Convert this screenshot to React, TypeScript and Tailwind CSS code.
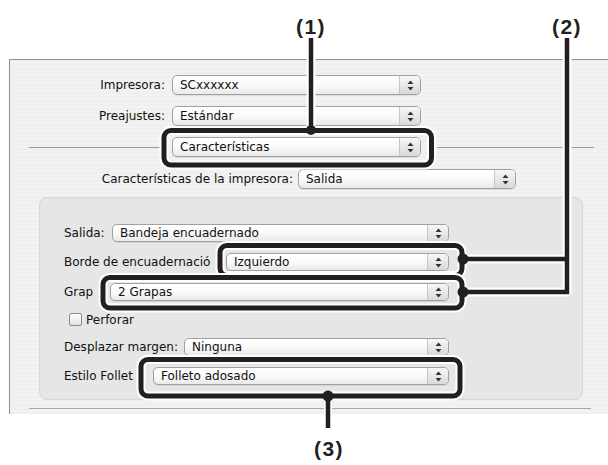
import React from "react";

const ui = { fontFamily: '"DejaVu Sans", "Liberation Sans", sans-serif' };
const callout = { fontFamily: '"Liberation Sans", Arial, sans-serif' };

function Arrows() {
  return (
    <svg width="7" height="11" viewBox="0 0 7 11">
      <path d="M3.5 0.5 L6.5 4 L0.5 4 Z" fill="#333" />
      <path d="M0.5 7 L6.5 7 L3.5 10.5 Z" fill="#333" />
    </svg>
  );
}

function Popup({ value, className }: { value: string; className: string }) {
  return (
    <div
      className={`flex shrink-0 items-stretch rounded-[5px] border border-[#a0a0a0] bg-gradient-to-b from-white via-[#fafafa] to-[#e9e9e9] shadow-[0_1px_0_rgba(0,0,0,0.08)] ${className}`}
    >
      <div className="flex flex-1 items-center whitespace-nowrap pl-[7px] text-[#111]">{value}</div>
      <div className="flex w-[21px] items-center justify-center rounded-r-[4px] border-l border-[#c6c6c6] bg-gradient-to-b from-[#f7f7f7] to-[#d9d9d9]">
        <Arrows />
      </div>
    </div>
  );
}

function Label({ text, className }: { text: string; className: string }) {
  return <div className={`shrink-0 whitespace-nowrap text-[#111] ${className}`}>{text}</div>;
}

function Overlay() {
  const k = "#231f20";
  return (
    <svg className="pointer-events-none absolute left-0 top-0" width="608" height="465" viewBox="0 0 608 465">
      <g fill="none" stroke="#fff" strokeWidth="9" strokeLinejoin="round">
        <rect x="164" y="130.5" width="267.5" height="34.5" rx="7" />
        <path d="M311 40 V130" />
        <rect x="220" y="245.5" width="242" height="30" rx="7" />
        <path d="M462 259 H567 V292 H462 M567 292 V40" />
      </g>
      <g fill="none" stroke={k} strokeWidth="5">
        <rect x="164" y="130.5" width="267.5" height="34.5" rx="7" />
        <rect x="220" y="245.5" width="242" height="30" rx="7" />
      </g>
      <g fill="none" stroke={k} strokeWidth="4.5">
        <path d="M311 38 V130" />
        <path d="M462 259 H567 M462 292 H567 M567 38 V294.2" />
      </g>
      <rect x="103" y="277.5" width="359" height="30.5" rx="7" fill="none" stroke="#fff" strokeWidth="9" />
      <rect x="103" y="277.5" width="359" height="30.5" rx="7" fill="none" stroke={k} strokeWidth="5" />
      <rect x="141" y="359.5" width="319" height="36.5" rx="7" fill="none" stroke="#fff" strokeWidth="9" />
      <path d="M328 396 V428" stroke="#fff" strokeWidth="8" />
      <rect x="141" y="359.5" width="319" height="36.5" rx="7" fill="none" stroke={k} strokeWidth="5" />
      <path d="M328 396 V428" stroke={k} strokeWidth="4.5" />
      <g fill={k}>
        <circle cx="311" cy="130" r="5" />
        <circle cx="463" cy="259" r="5.5" />
        <circle cx="463" cy="292" r="5.5" />
        <circle cx="328" cy="396" r="5.5" />
      </g>
    </svg>
  );
}

export default function App() {
  return (
    <div className="relative h-[465px] w-[608px] overflow-hidden bg-white text-[12px]" style={ui}>
      <div className="ml-[9px] mt-[59px] flex h-[355px] w-[599px] flex-col border-l border-t border-[#8f8f8f] bg-[repeating-linear-gradient(0deg,#efefef_0px,#efefef_2px,#f2f2f2_2px,#f2f2f2_4px)] pt-[15px]">
        <div className="flex h-[20px] items-center">
          <Label text="Impresora:" className="w-[155px] text-right" />
          <Popup value="SCxxxxxx" className="ml-[7px] h-[20px] w-[249px]" />
        </div>
        <div className="mt-[11px] flex h-[20px] items-center">
          <Label text="Preajustes:" className="w-[155px] text-right" />
          <Popup value="Estándar" className="ml-[7px] h-[20px] w-[249px]" />
        </div>
        <div className="mt-[11px] flex h-[20px] items-center">
          <div className="ml-[19px] h-px w-[131px] bg-[#9a9a9a]" />
          <Popup value="Características" className="ml-[12px] h-[20px] w-[249px]" />
          <div className="ml-[16px] h-px w-[157px] bg-[#9a9a9a]" />
        </div>
        <div className="mt-[12px] flex h-[20px] items-center">
          <Label text="Características de la impresora:" className="w-[283px] text-right" />
          <Popup value="Salida" className="ml-[5px] h-[20px] w-[218px]" />
        </div>
        <div className="ml-[29px] mt-[8px] flex h-[203px] w-[544px] flex-col rounded-[8px] border border-[#d6d6d6] bg-[#e6e6e6] pl-[24px] pt-[26px]">
          <div className="flex h-[18px] items-center">
            <Label text="Salida:" className="w-[45px]" />
            <Popup value="Bandeja  encuadernado" className="ml-[3px] h-[18px] w-[337px]" />
          </div>
          <div className="mt-[11px] flex h-[18px] items-center">
            <Label text="Borde de encuadernació" className="w-[156px]" />
            <Popup value="Izquierdo" className="ml-[6px] h-[18px] w-[223px]" />
          </div>
          <div className="mt-[12px] flex h-[18px] items-center">
            <Label text="Grap" className="w-[39px]" />
            <Popup value="2 Grapas" className="ml-[7px] h-[18px] w-[339px]" />
          </div>
          <div className="mt-[12px] flex h-[13px] items-center">
            <div className="ml-[5px] h-[13px] w-[13px] rounded-[2px] border border-[#8a8a8a] bg-gradient-to-b from-white to-[#e2e2e2]" />
            <span className="ml-[4px] text-[#111]">Perforar</span>
          </div>
          <div className="mt-[12px] flex h-[18px] items-center">
            <Label text="Desplazar margen:" className="w-[117px]" />
            <Popup value="Ninguna" className="ml-[3px] h-[18px] w-[265px]" />
          </div>
          <div className="mt-[11px] flex h-[18px] items-center">
            <Label text="Estilo Follet" className="w-[77px]" />
            <Popup value="Folleto adosado" className="ml-[12px] h-[18px] w-[296px]" />
          </div>
        </div>
        <div className="ml-[19px] mt-[8px] h-px w-[562px] bg-[#a8a8a8]" />
      </div>

      <Overlay />

      <div className="absolute left-[291px] top-[15px] w-[40px] text-center text-[21px] font-bold leading-[24px] tracking-[1.5px] text-[#231f20]" style={callout}>
        (1)
      </div>
      <div className="absolute left-[547px] top-[15px] w-[40px] text-center text-[21px] font-bold leading-[24px] tracking-[1.5px] text-[#231f20]" style={callout}>
        (2)
      </div>
      <div className="absolute left-[309px] top-[437px] w-[40px] text-center text-[21px] font-bold leading-[24px] tracking-[1.5px] text-[#231f20]" style={callout}>
        (3)
      </div>
    </div>
  );
}
